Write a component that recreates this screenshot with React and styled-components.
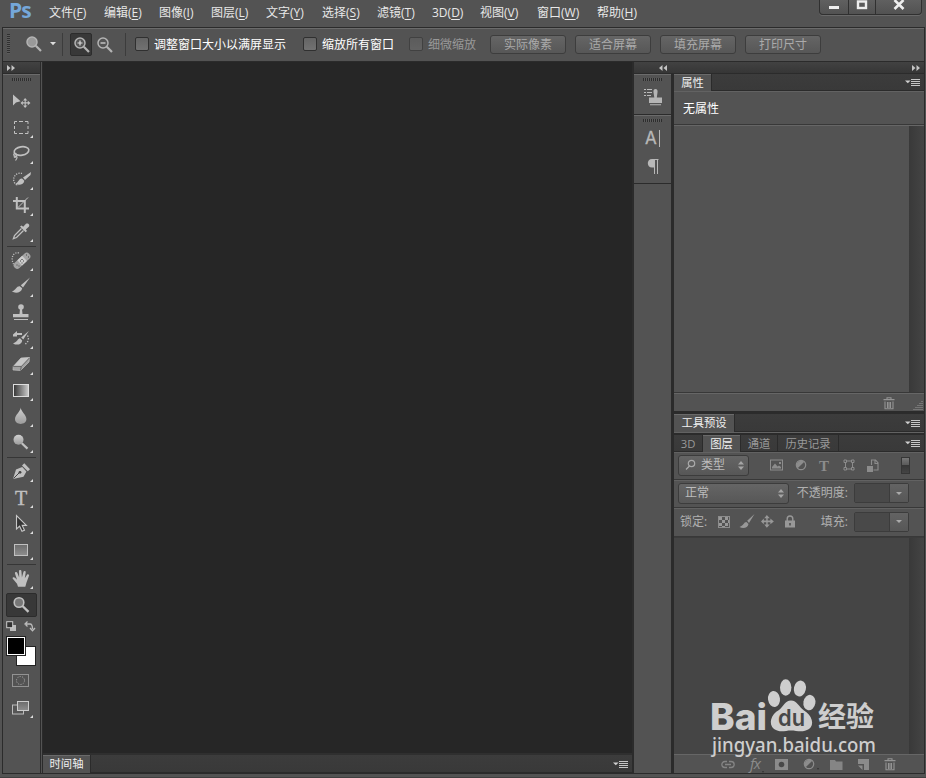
import styled, { createGlobalStyle, css } from 'styled-components';

const ICON = '#c0c0c0';
const DARK = '#2b2b2b';

const MENUS = [
  ['文件', 'F', 55],
  ['编辑', 'E', 55],
  ['图像', 'I', 52],
  ['图层', 'L', 55],
  ['文字', 'Y', 56],
  ['选择', 'S', 55],
  ['滤镜', 'T', 55],
  ['3D', 'D', 48],
  ['视图', 'V', 57],
  ['窗口', 'W', 60],
  ['帮助', 'H', 50],
];

function Icon({ w = 22, h = 22, children }) {
  return (
    <Svg width={w} height={h} viewBox={`0 0 ${w} ${h}`} fill="none">
      {children}
    </Svg>
  );
}

const BRUSH = 'M20 1.5 L10.8 9.2 L13 11.4 Z M9.8 10.2 C6.5 9.8 6.2 13.8 1.8 15.6 C6 18 11.5 16.5 12.2 12.2 Z';
const CROSS = 'M5 0 L7.5 2.8 H5.7 V4.8 H8 V3 L11 5.5 L8 8 V6.2 H5.7 V8.2 H7.5 L5 11 L2.8 8.2 H4.5 V6.2 H2.4 V8 L0 5.5 L2.4 3 V4.8 H4.5 V2.8 H2.8 Z';

const TOOLS = [
  [
    {
      id: 'move',
      plain: true,
      icon: (
        <>
          <path d="M3 3.5 V14.5 L6 11.5 L10.6 10.2 Z" fill={ICON} />
          <path d={CROSS} fill={ICON} transform="translate(10.6 7) scale(.9)" />
        </>
      ),
    },
    { id: 'marquee', icon: <path d="M4.5 7 V4.5 H7 M9 4.5 H13 M15 4.5 H18 V7 M18 9 V12 M18 14 V16.5 H15 M13 16.5 H9 M7 16.5 H4.5 V14 M4.5 12 V9" stroke={ICON} /> },
    {
      id: 'lasso',
      icon: (
        <>
          <ellipse cx="11.5" cy="8" rx="7.4" ry="4.2" stroke={ICON} strokeWidth="1.6" transform="rotate(-10 11.5 8)" />
          <path d="M6.5 10.5 C3 9.5 3 13 5.5 13.3 C8 13.5 7 15.5 5.5 17.5 M4 13.4 C4.5 15.5 6 14 6.8 11.5" stroke={ICON} strokeWidth="1.2" />
        </>
      ),
    },
    {
      id: 'quick',
      icon: (
        <>
          <path d="M12 4.5 A6 6 0 1 0 8 16.5" stroke={ICON} strokeWidth="1.3" strokeDasharray="1.2 1.2" />
          <path d="M21 3 L13 8.6 L15 11 L20.5 6 Z M12 9.5 C8.7 9.4 9 13 5.5 14.8 C9 16.8 14 15.5 14.3 11.8 Z" fill={ICON} />
        </>
      ),
    },
    {
      id: 'crop',
      icon: (
        <>
          <path d="M6.8 2 V13.5 H19 M3 6 H14.8 V18" stroke={ICON} strokeWidth="2" />
          <path d="M8 12.5 L18 2.5" stroke={ICON} />
        </>
      ),
    },
    {
      id: 'dropper',
      icon: (
        <>
          <path d="M11.5 7.5 L4.5 14.5 L3.4 17.6 L6.5 16.5 L13.5 9.5" stroke={ICON} strokeWidth="1.3" />
          <path d="M10 5.5 L11.5 4.5 L13.2 5.8 L16 2.8 C18 1.5 20.3 3.8 18.8 5.8 L15.8 8.4 L17 10 L15.6 11.3 Z" fill={ICON} />
        </>
      ),
    },
  ],
  [
    {
      id: 'heal',
      icon: (
        <>
          <path d="M9 3 C4 1.5 0 7 3.5 14" stroke={ICON} strokeWidth="1.3" strokeDasharray="1.2 1.3" />
          <rect x="1.8" y="7.2" width="20" height="7" rx="3.2" fill="#a4a4a4" transform="rotate(-43 12 10.5)" />
          <rect x="8.7" y="7.2" width="6.6" height="7" fill="#cdcdcd" transform="rotate(-43 12 10.5)" />
          <path d="M12 9 v1 M10 11 h1 M13 11 h1 M11.5 13 h1 M6.5 15 h1 M8.5 16 h1 M16 5 h1 M18 7 h1" stroke="#444" strokeWidth="1.2" />
        </>
      ),
    },
    { id: 'brush', icon: <path d={BRUSH} fill={ICON} /> },
    {
      id: 'stamp',
      icon: (
        <>
          <circle cx="11" cy="5" r="2.8" fill={ICON} />
          <path d="M10 7 H12 L12.5 12 H18.5 V15.2 H3 V12 H9.5 Z M4 17 H18 V18 H4 Z" fill={ICON} />
        </>
      ),
    },
    {
      id: 'history',
      icon: (
        <>
          <path d="M18.8 3 L11.2 9.4 L13.3 11.4 Z M10 10.2 C7.6 10.4 7.5 14 3 15.4 C7 17.8 12 16.4 12.2 12.4 Z" fill={ICON} />
          <path d="M3 6.5 L7 3 V5 H12 V7 H7 V8.5 H3 Z" fill={ICON} />
          <path d="M17.5 7.5 C19.5 11 18 15 14 16.7" stroke={ICON} strokeWidth="1.4" strokeDasharray="1.3 1.5" />
        </>
      ),
    },
    {
      id: 'eraser',
      icon: (
        <>
          <path d="M11 4 L19.5 3.5 L19 8 L10.5 16.5 L3 16 L3.2 12.6 Z" fill="#a0a0a0" stroke={ICON} strokeWidth=".7" />
          <path d="M11 4 L19.5 3.5 L11.5 12.2 L3.2 12.6 Z" fill="#c8c8c8" />
          <path d="M3.2 12.4 H11.4 L19.4 4 M11.3 12.4 L10.5 16.5" stroke="#555" strokeWidth=".8" />
        </>
      ),
    },
    { id: 'gradient', icon: <rect x="3.5" y="4.5" width="15" height="12" fill="url(#ramp)" stroke="#ddd" /> },
    { id: 'blur', icon: <path d="M10.7 1.6 C10.7 5.5 5 9 5 13 C5 19.5 16.4 19.5 16.4 13 C16.4 9 10.8 5.5 10.7 1.6 Z" fill="url(#metal)" /> },
    {
      id: 'dodge',
      icon: (
        <>
          <circle cx="8.5" cy="7.8" r="5" fill="url(#metal)" />
          <path d="M11.8 11.2 L17.5 16.6" stroke={ICON} strokeWidth="2.2" />
        </>
      ),
    },
  ],
  [
    {
      id: 'pen',
      icon: (
        <>
          <path d="M3 18 L6 8.5 L12.2 6 L16.4 10.4 L13.5 15.8 Z M12 4.5 L14.3 2.2 L20 8.2 L17.8 10.2 Z" fill={ICON} />
          <path d="M3.5 17.5 L9 12" stroke="#444" />
          <circle cx="10" cy="11.3" r="1.4" fill="#444" />
        </>
      ),
    },
    { id: 'type', icon: <text x="11" y="17.5" fontSize="20" textAnchor="middle" fontFamily="Liberation Serif, serif" stroke={ICON} strokeWidth=".4" fill={ICON}>T</text> },
    { id: 'path', icon: <path d="M6.5 2.5 V16 L9.6 13.2 L12 18.3 L14.5 17.2 L12.2 12.4 H16.4 Z" fill="#353535" stroke="#c8c8c8" strokeWidth="1.1" /> },
    { id: 'shape', icon: <rect x="4.5" y="5.5" width="13" height="11" fill="url(#grey)" stroke={ICON} /> },
  ],
  [
    { id: 'hand', icon: <path d="M8 18.8 L7 15.8 L2.6 10.6 C2.4 9.2 4 8.8 5 9.8 L7 11.8 L4.9 5.2 C4.9 3.8 6.9 3.6 7.4 5 L9.2 9.6 L9 3 C9.1 1.8 11.3 1.8 11.4 3 L11.9 9.5 L13.5 3.8 C14 2.6 15.9 3 15.7 4.4 L14.8 10.3 L17.2 6.5 C18.2 5.6 19.5 6.6 19 7.8 L16.5 14.6 L15.3 18.8 Z" fill={ICON} /> },
    {
      id: 'zoom',
      plain: true,
      active: true,
      icon: (
        <>
          <circle cx="9" cy="8.5" r="4.8" fill="#777" stroke={ICON} strokeWidth="1.6" />
          <path d="M12.5 12 L18.5 17.8" stroke={ICON} strokeWidth="2.4" />
        </>
      ),
    },
  ],
];

function Defs() {
  return (
    <DefsSvg width="0" height="0">
      <linearGradient id="ramp">
        <stop offset="0" stopColor="#333" />
        <stop offset="1" stopColor="#ccc" />
      </linearGradient>
      <linearGradient id="metal" x2="0" y2="1">
        <stop offset="0" stopColor="#d0d0d0" />
        <stop offset="1" stopColor="#9c9c9c" />
      </linearGradient>
      <linearGradient id="grey" x2="0" y2="1">
        <stop offset="0" stopColor="#6c6c6c" />
        <stop offset="1" stopColor="#8e8e8e" />
      </linearGradient>
    </DefsSvg>
  );
}

function Magnifier({ sign }) {
  return (
    <Icon w={18} h={18}>
      <circle cx="7" cy="7" r="5" fill={sign ? '#555' : '#999'} stroke="#b4b4b4" strokeWidth="1.5" />
      <path d="M10.8 10.8 L16 16" stroke="#b4b4b4" strokeWidth="2.2" />
      {sign && <path d={sign === '+' ? 'M4.5 7 H9.5 M7 4.5 V9.5' : 'M4.5 7 H9.5'} stroke="#ddd" strokeWidth="1.2" />}
    </Icon>
  );
}

function PanelMenu() {
  return (
    <Icon w={15} h={9}>
      <path d="M0 2.5 H5.6 L2.8 5.3 Z" fill="#d0d0d0" />
      <path d="M6 1.5 H15 M6 3.5 H15 M6 5.5 H15 M6 7.5 H15" stroke="#c6c6c6" />
    </Icon>
  );
}

function Chevrons({ left }) {
  return (
    <Icon w={8} h={6}>
      <path d={left ? 'M3.5 0 V6 L0 3 Z M8 0 V6 L4.5 3 Z' : 'M0 0 V6 L3.5 3 Z M4.5 0 V6 L8 3 Z'} fill="#c4c4c4" />
    </Icon>
  );
}

function Trash() {
  return (
    <Icon w={12} h={13}>
      <path d="M4 2 V.7 H8 V2 M.5 2.6 H11.5 M2 4.5 V11.8 H10 V4.5 M4.5 5 V11 M6 5 V11 M7.5 5 V11" stroke="#949494" strokeWidth="1.1" />
    </Icon>
  );
}

function UpDown() {
  return (
    <Icon w={6} h={9}>
      <path d="M0 3.5 L3 0 L6 3.5 Z M0 5.5 L3 9 L6 5.5 Z" fill="#a5a5a5" />
    </Icon>
  );
}

function Adjust() {
  return (
    <Icon w={12} h={12}>
      <circle cx="6" cy="6" r="4.7" stroke="#8c8c8c" strokeWidth="1.2" />
      <path d="M9.3 2.7 A4.7 4.7 0 0 0 2.7 9.3 Z" fill="#8c8c8c" />
    </Icon>
  );
}

function NumberField() {
  return (
    <Field>
      <FieldValue />
      <FieldButton>
        <Icon w={6} h={3}>
          <path d="M0 0 H6 L3 3 Z" fill="#aaa" />
        </Icon>
      </FieldButton>
    </Field>
  );
}

function Toolbox() {
  return (
    <ToolColumn>
      <ColumnHead $pad="4px">
        <Chevrons />
      </ColumnHead>
      <GripRow>
        <Grip />
      </GripRow>
      {TOOLS.map((group) => (
        <ToolGroup key={group[0].id}>
          {group.map((tool) => (
            <Tool key={tool.id} $active={tool.active} $corner={!tool.plain}>
              <Icon>{tool.icon}</Icon>
            </Tool>
          ))}
        </ToolGroup>
      ))}
      <MiniRow>
        <Icon w={11} h={11}>
          <rect x="4" y="4" width="6" height="6" fill="#bbb" />
          <rect x=".7" y=".7" width="6" height="6" fill="#333" stroke="#ccc" />
        </Icon>
        <Icon w={11} h={11}>
          <path d="M2 3 H6 Q8.5 3 8.5 8 M3.5 .5 L1 3 L3.5 5.5 M6 7 L8.5 9.8 L11 7" stroke="#bbb" strokeWidth="1.3" />
        </Icon>
      </MiniRow>
      <Swatches>
        <Swatch $color="#fff" $back />
        <Swatch $color="#000" />
      </Swatches>
      <ModeIcon $h={29}>
        <Icon w={17} h={13}>
          <rect x=".5" y=".5" width="16" height="12" stroke="#929292" />
          <circle cx="8.5" cy="6.5" r="4" stroke="#aaa" strokeDasharray="1.1 1.4" />
        </Icon>
      </ModeIcon>
      <ModeIcon $h={26} $corner>
        <Icon w={17} h={14}>
          <rect x=".5" y="4" width="11" height="9" fill="#555" stroke="#bbb" />
          <rect x="5.5" y=".5" width="11" height="9" fill="url(#grey)" stroke="#ccc" />
        </Icon>
      </ModeIcon>
    </ToolColumn>
  );
}

function Dock() {
  return (
    <DockColumn>
      <DockGroup $h={40}>
        <Grip />
        <DockIcon $top={7}>
          <Icon w={20} h={18}>
            <path d="M1 1.5 H3 M1 4.5 H3 M1 7.5 H3 M4 1.5 H9 M4 4.5 H9 M4 7.5 H8" stroke="#bbb" />
            <path d="M10.5 4.5 Q10 1 12.5 1 Q15 1 14.5 4.5 L13.8 9.5 H19 V15 H6 V9.5 H11.3 Z M7 16.2 H18 V17.2 H7 Z" fill="#b5b5b5" />
          </Icon>
        </DockIcon>
      </DockGroup>
      <DockGroup $h={68}>
        <Grip />
        <DockIcon $top={7}>
          <Icon w={16} h={18}>
            <text x="0" y="15" fontSize="17" fontFamily="Inter, sans-serif" stroke="#b8b8b8" strokeWidth=".3" fill="#b8b8b8">A</text>
            <path d="M14.5 1 V18" stroke="#b8b8b8" />
          </Icon>
        </DockIcon>
        <DockIcon $top={12}>
          <Icon w={14} h={16}>
            <path d="M12.5 .5 H6 M8.5 1 V15 M11.5 1 V15" stroke="#b8b8b8" />
            <path d="M9 0 H6 C.4 0 .4 8.5 6 8.5 H9 Z" fill="#b8b8b8" />
          </Icon>
        </DockIcon>
      </DockGroup>
    </DockColumn>
  );
}

function Panels() {
  return (
    <PanelStack>
      <TabBar $h={17}>
        <Tab $w={38} $active>属性</Tab>
        <PanelMenu />
      </TabBar>
      <PropertyTitle>无属性</PropertyTitle>
      <ScrollArea $h={267} />
      <PropertyFooter>
        <Trash />
        <Icon w={10} h={10}>
          <path d="M9 1 v1 M7 3 v1 M9 3 v1 M5 5 v1 M7 5 v1 M9 5 v1 M3 7 v1 M5 7 v1 M7 7 v1 M9 7 v1 M1 9 v1 M3 9 v1 M5 9 v1 M7 9 v1 M9 9 v1" stroke="#999" />
        </Icon>
      </PropertyFooter>
      <TabBar $h={18}>
        <Tab $w={61} $active>工具预设</Tab>
        <PanelMenu />
      </TabBar>
      <Gap />
      <TabBar $h={17}>
        <Tab $w={29}>3D</Tab>
        <Tab $w={38} $active>图层</Tab>
        <Tab $w={37}>通道</Tab>
        <Tab $w={61}>历史记录</Tab>
        <PanelMenu />
      </TabBar>
      <LayerRow $h={28}>
        <Select $w={71}>
          <Icon w={11} h={12}>
            <circle cx="6.5" cy="4.5" r="3.2" stroke="#aaa" strokeWidth="1.2" />
            <path d="M4.5 7 L1 10.5" stroke="#aaa" strokeWidth="1.3" />
          </Icon>
          <span>类型</span>
          <UpDown />
        </Select>
        <FilterIcons>
          <Icon w={13} h={12}>
            <rect x=".5" y="1" width="12" height="10" stroke="#8c8c8c" />
            <path d="M2 9.5 V8 L5 4.5 L7.5 7.5 L9 6.5 L11 8 V9.5 Z M9 3 h2 v2 h-2 Z" fill="#8c8c8c" />
          </Icon>
          <Adjust />
          <Icon w={12} h={13}>
            <text x="5" y="11.5" fontSize="15" fontWeight="bold" textAnchor="middle" fontFamily="Liberation Serif, serif" fill="#8c8c8c">T</text>
          </Icon>
          <Icon w={12} h={12}>
            <path d="M2.5 3 V9 M9.5 3 V9 M3 2 H9 M3 10 H9" stroke="#8c8c8c" />
            <path d="M1 1 h2.5 v2.5 h-2.5 Z M8.5 1 h2.5 v2.5 h-2.5 Z M1 8.5 h2.5 v2.5 h-2.5 Z M8.5 8.5 h2.5 v2.5 h-2.5 Z" fill="#535353" stroke="#8c8c8c" />
          </Icon>
          <Icon w={12} h={13}>
            <path d="M4.5 6 V1 H8.5 L11 3.8 V11 H6.5 M8 1 V4.5 H11" stroke="#8c8c8c" strokeWidth="1.1" />
            <path d="M0 7 H6 V13 H0 Z" fill="#8c8c8c" />
          </Icon>
        </FilterIcons>
        <Switch />
      </LayerRow>
      <LayerRow $h={28}>
        <Select $w={111}>
          <span>正常</span>
          <UpDown />
        </Select>
        <FieldLabel>不透明度:</FieldLabel>
        <NumberField />
      </LayerRow>
      <LayerRow $h={29}>
        <LockLabel>锁定:</LockLabel>
        <LockIcons>
          <Icon w={12} h={12}>
            <rect x=".5" y=".5" width="11" height="11" stroke="#8c8c8c" />
            <path d="M1 1h3v3H1Z M7 1h3v3H7Z M4 4h3v3H4Z M1 7h3v3H1Z M7 7h3v3H7Z M10 4h1v3h-1Z M4 10h3v1H4Z" fill="#989898" />
          </Icon>
          <Icon w={13} h={15}>
            <path d="M15.5 0 L8.2 6.8 L10 9 Z M7.5 8 C4.5 8 5 11.5 .5 13 C4 15.2 9 14 9.5 10 Z" fill="#989898" />
          </Icon>
          <Icon w={15} h={13}>
            <path d={CROSS} fill="#989898" transform="scale(1.17)" />
          </Icon>
          <Icon w={10} h={13}>
            <path d="M2.2 6 V4 Q2.2 1 5 1 Q7.8 1 7.8 4 V6" stroke="#989898" strokeWidth="1.4" />
            <path d="M0 5.5 H10 V12.5 H0 Z" fill="#989898" />
            <path d="M5 8 V10.5" stroke="#444" strokeWidth="1.4" />
          </Icon>
        </LockIcons>
        <FieldLabel>填充:</FieldLabel>
        <NumberField />
      </LayerRow>
      <ScrollArea $dim />
      <LayerFooter>
        <Icon w={14} h={9}>
          <path d="M6 1.5 H4 C-.2 1.5 -.2 7.5 4 7.5 H6 M8 1.5 H10 C14.2 1.5 14.2 7.5 10 7.5 H8 M4 4.5 H10" stroke="#858585" strokeWidth="1.3" />
        </Icon>
        <MenuIcon><Fx>fx</Fx></MenuIcon>
        <Icon w={13} h={11}>
          <rect width="13" height="11" fill="#8b8b8b" />
          <circle cx="6.5" cy="5.5" r="2.8" fill="#484848" />
        </Icon>
        <MenuIcon><Adjust /></MenuIcon>
        <Icon w={13} h={11}>
          <path d="M0 1 H5 L6 2.5 H12.5 V11 H0 Z" fill="#858585" />
        </Icon>
        <Icon w={11} h={11}>
          <path d="M0 0 H11 V11 H6 V5 H0 Z M0 6.5 H4.5 V11 Z" fill="#8b8b8b" />
        </Icon>
        <Trash />
      </LayerFooter>
    </PanelStack>
  );
}

function Watermark() {
  return (
    <Mark width="170" height="92" viewBox="708 677 170 92" fill="#cecece">
      <text x="710" y="730" fontFamily="Inter, sans-serif" fontWeight="800" fontSize="37" textLength="57" lengthAdjust="spacingAndGlyphs">Bai</text>
      <ellipse cx="774" cy="699" rx="6" ry="8" transform="rotate(-8 774 699)" />
      <ellipse cx="785.7" cy="687.5" rx="5.7" ry="8.3" />
      <ellipse cx="800" cy="688.5" rx="6" ry="8" transform="rotate(12 800 688)" />
      <ellipse cx="809.5" cy="702.5" rx="6" ry="7.8" transform="rotate(10 809 702)" />
      <path d="M791 700.5 C797 700.5 799 707 804 710.5 C812 715 815 725 809 729 C803 733 797 730.5 791 730.5 C785 730.5 780 733 774 729 C768 724 771 714 779 710 C784 706 785 700.5 791 700.5 Z" />
      <text x="778" y="726" fontFamily="Inter, sans-serif" fontWeight="600" fontSize="23" textLength="27" lengthAdjust="spacingAndGlyphs" fill="#484848">du</text>
      <text x="818" y="727" fontFamily="'Noto Sans CJK SC', sans-serif" fontWeight="700" fontSize="28" textLength="56" lengthAdjust="spacingAndGlyphs">经验</text>
      <text x="712" y="752" fontFamily="'Noto Sans', sans-serif" fontWeight="500" fontSize="19" textLength="164" lengthAdjust="spacingAndGlyphs">jingyan.baidu.com</text>
    </Mark>
  );
}

export default function App() {
  return (
    <Window>
      <GlobalStyle />
      <Defs />
      <MenuBar>
        <Logo>Ps</Logo>
        {MENUS.map(([label, key, width]) => (
          <MenuItem key={key} $w={width}>
            {label}(<u>{key}</u>)
          </MenuItem>
        ))}
        <WindowButtons>
          <WindowButton $w={28}>
            <Icon w={12} h={12}>
              <rect x="1" y="6" width="10" height="3" fill="#eee" />
            </Icon>
          </WindowButton>
          <WindowButton $w={27}>
            <Icon w={12} h={12}>
              <rect x="2" y="1.5" width="8" height="6.5" stroke="#eee" strokeWidth="2.4" />
            </Icon>
          </WindowButton>
          <WindowButton $w={46}>
            <Icon w={12} h={12}>
              <path d="M1.5 0 L10.5 9 M10.5 0 L1.5 9" stroke="#eee" strokeWidth="2.6" />
            </Icon>
          </WindowButton>
        </WindowButtons>
      </MenuBar>
      <Frame>
        <OptionsBar>
          <SideGrip />
          <CurrentTool>
            <Magnifier />
            <Icon w={6} h={4}>
              <path d="M0 0 H6 L3 3.3 Z" fill="#ddd" />
            </Icon>
          </CurrentTool>
          <ZoomModes>
            <ZoomMode $active><Magnifier sign="+" /></ZoomMode>
            <ZoomMode><Magnifier sign="-" /></ZoomMode>
          </ZoomModes>
          <Option $gap={17}><CheckBox />调整窗口大小以满屏显示</Option>
          <Option $gap={15}><CheckBox />缩放所有窗口</Option>
          <Option $gap={14} $disabled><CheckBox />细微缩放</Option>
          <OptionButton>实际像素</OptionButton>
          <OptionButton>适合屏幕</OptionButton>
          <OptionButton>填充屏幕</OptionButton>
          <OptionButton>打印尺寸</OptionButton>
        </OptionsBar>
        <Workspace>
          <Toolbox />
          <Center>
            <Canvas />
            <TabBar $h={18}>
              <Tab $w={48} $active>时间轴</Tab>
              <PanelMenu />
            </TabBar>
          </Center>
          <RightSide>
            <RightHead>
              <Chevrons left />
              <Chevrons />
            </RightHead>
            <RightBody>
              <Dock />
              <Panels />
            </RightBody>
          </RightSide>
        </Workspace>
      </Frame>
      <Watermark />
    </Window>
  );
}

const GlobalStyle = createGlobalStyle`
  * {
    box-sizing: border-box;
  }
  body {
    margin: 0;
    overflow: hidden;
    background: #535353;
  }
`;

const Svg = styled.svg`
  display: block;
  flex: none;
  overflow: visible;
`;

const DefsSvg = styled.svg`
  position: absolute;
`;

const Window = styled.div`
  position: relative;
  width: 926px;
  height: 778px;
  display: flex;
  flex-direction: column;
  background: #535353;
  border-bottom: 1px solid #404040;
  color: #e8e8e8;
  font: 12px/16px 'Open Sans', 'Noto Sans CJK SC', sans-serif;
  white-space: nowrap;
  overflow: hidden;
`;

const MenuBar = styled.div`
  height: 27px;
  flex: none;
  display: flex;
  padding-left: 9px;
`;

const Logo = styled.div`
  width: 40px;
  color: #75a7da;
  font: 700 21px/20px 'Open Sans', sans-serif;
  letter-spacing: -1px;
`;

const MenuItem = styled.div`
  width: ${({ $w }) => $w}px;
  flex: none;
  padding-top: 5px;
  font-size: 12px;

  u {
    text-underline-offset: 2px;
  }
`;

const WindowButtons = styled.div`
  display: flex;
  height: 15px;
  margin-left: auto;
  margin-right: 4px;
  border: 1px solid #303030;
  border-top: 0;
  border-radius: 0 0 4px 4px;
  background: linear-gradient(#606060, #525252);
  box-shadow: 0 1px 0 #696969;
`;

const WindowButton = styled.div`
  width: ${({ $w }) => $w}px;
  display: flex;
  justify-content: center;

  & + & {
    border-left: 1px solid #303030;
  }
`;

const Frame = styled.div`
  height: 747px;
  flex: none;
  margin: 0 1px 0 2px;
  display: flex;
  flex-direction: column;
  border: 1px solid ${DARK};
`;

const OptionsBar = styled.div`
  height: 34px;
  flex: none;
  display: flex;
  align-items: center;
  padding: 0 0 2px 4px;
  border-top: 1px solid #6b6b6b;
  border-bottom: 1px solid ${DARK};
`;

const SideGrip = styled.div`
  width: 3px;
  height: 20px;
  background: repeating-linear-gradient(#303030 0 1px, #5c5c5c 1px 2px);
`;

const CurrentTool = styled.div`
  display: flex;
  align-items: center;
  gap: 7px;
  height: 23px;
  width: 53px;
  padding-left: 15px;
  border-right: 1px solid #3c3c3c;
`;

const ZoomModes = styled.div`
  display: flex;
  gap: 2px;
  height: 23px;
  width: 63px;
  padding-left: 7px;
  border-right: 1px solid #3c3c3c;
`;

const ZoomMode = styled.div`
  width: 22px;
  height: 23px;
  padding: 3px 0 0 2px;
  border-radius: 2px;
  ${({ $active }) => $active && css`
    background: #383838;
    border: 1px solid #2c2c2c;
    padding: 2px;
  `}
`;

const CheckBox = styled.span`
  width: 14px;
  height: 14px;
  margin-right: 5px;
  margin-top: -1px;
  border: 1px solid #303030;
  border-radius: 2px;
  background: linear-gradient(#646464, #727272);
`;

const Option = styled.label`
  display: flex;
  align-items: center;
  margin-right: ${({ $gap }) => $gap}px;
  padding-top: 1px;
  color: ${({ $disabled }) => ($disabled ? '#999' : '#fff')};

  &:first-of-type {
    margin-left: 9px;
  }
  ${CheckBox} {
    opacity: ${({ $disabled }) => ($disabled ? 0.5 : 1)};
  }
`;

const OptionButton = styled.button`
  width: 76px;
  height: 19px;
  margin: 0 9px 0 0;
  padding: 1px 0 0;
  border: 1px solid #3d3d3d;
  border-radius: 3px;
  background: linear-gradient(#656565, #575757);
  color: #aaa;
  font: inherit;
  line-height: 16px;
`;

const Workspace = styled.div`
  flex: 1;
  min-height: 0;
  display: flex;
`;

const ToolColumn = styled.div`
  width: 38px;
  flex: none;
  display: flex;
  flex-direction: column;
  border-right: 1px solid ${DARK};
`;

const ColumnHead = styled.div`
  height: 12px;
  flex: none;
  display: flex;
  align-items: center;
  padding-left: ${({ $pad }) => $pad};
  background: linear-gradient(#424242, #363636);
  border-bottom: 1px solid ${DARK};
`;

const Grip = styled.div`
  width: 19px;
  height: 3px;
  flex: none;
  background: repeating-linear-gradient(90deg, #2d2d2d 0 1px, #5c5c5c 1px 2px);
`;

const GripRow = styled.div`
  height: 15px;
  flex: none;
  padding: 3px 0 0 9px;
  border-top: 1px solid #6b6b6b;
`;

const ToolGroup = styled.div`
  & + & {
    padding-top: 3px;
    background: linear-gradient(#363636, #363636) 4px 1px / 29px 1px no-repeat;
  }
`;

const cornerMark = css`
  &::after {
    content: '';
    position: absolute;
    left: 27px;
    bottom: 3px;
    border-left: 3px solid transparent;
    border-bottom: 3px solid #ddd;
  }
`;

const Tool = styled.div`
  position: relative;
  height: 26px;
  padding: 2px 0 0 7px;
  ${({ $corner }) => $corner && cornerMark}
  ${({ $active }) => $active && css`
    height: 24px;
    width: 31px;
    margin: 1px 0 1px 3px;
    padding: 0 0 0 3px;
    border: 1px solid #2c2c2c;
    border-radius: 2px;
    background: #383838;
  `}
`;

const MiniRow = styled.div`
  height: 18px;
  flex: none;
  display: flex;
  gap: 7px;
  padding: 3px 0 0 3px;
`;

const Swatches = styled.div`
  position: relative;
  height: 30px;
  width: 30px;
  margin-left: 3px;
  flex: none;
`;

const Swatch = styled.div`
  position: absolute;
  width: 20px;
  height: 20px;
  top: ${({ $back }) => ($back ? 10 : 0)}px;
  left: ${({ $back }) => ($back ? 10 : 0)}px;
  background: ${({ $color }) => $color};
  border: 1px solid #222;
  box-shadow: inset 0 0 0 1px #fff;
`;

const ModeIcon = styled.div`
  position: relative;
  height: ${({ $h }) => $h}px;
  flex: none;
  display: flex;
  align-items: center;
  padding-left: 9px;
  ${({ $corner }) => $corner && cornerMark}
`;

const Center = styled.div`
  width: 590px;
  flex: none;
  margin-left: 1px;
  display: flex;
  flex-direction: column;
  border-left: 1px solid ${DARK};
`;

const Canvas = styled.div`
  flex: 1;
  background: #262626;
  border-bottom: 2px solid #2f2f2f;
`;

const TabBar = styled.div`
  height: ${({ $h }) => $h}px;
  flex: none;
  display: flex;
  align-items: center;
  background: linear-gradient(#3c3c3c, #393939);
  box-shadow: inset 0 -1px #2b2b2b;

  > svg {
    margin: 0 4px 0 auto;
  }
`;

const Tab = styled.div`
  width: ${({ $w }) => $w}px;
  height: 100%;
  padding-top: 1px;
  text-align: center;
  color: #999;
  font-size: 11.3px;
  border-right: 1px solid ${DARK};
  box-shadow: inset 0 -1px #2b2b2b;
  ${({ $active }) => $active && css`
    color: #f0f0f0;
    background: #535353;
    box-shadow: inset 0 1px #6a6a6a;
  `}
`;

const RightSide = styled.div`
  flex: 1;
  display: flex;
  flex-direction: column;
  border-left: 2px solid ${DARK};
`;

const RightHead = styled.div`
  height: 12px;
  flex: none;
  display: flex;
  align-items: center;
  justify-content: space-between;
  padding: 0 4px 0 25px;
  background: linear-gradient(#424242, #363636);
  border-bottom: 1px solid ${DARK};
`;

const RightBody = styled.div`
  flex: 1;
  min-height: 0;
  display: flex;
`;

const DockColumn = styled.div`
  width: 40px;
  flex: none;
  border-right: 3px solid ${DARK};
`;

const DockGroup = styled.div`
  height: ${({ $h }) => $h + 1}px;
  display: flex;
  flex-direction: column;
  align-items: center;
  padding-top: 3px;
  border-top: 1px solid #6b6b6b;
  border-bottom: 1px solid ${DARK};
`;

const DockIcon = styled.div`
  margin-top: ${({ $top }) => $top}px;
`;

const PanelStack = styled.div`
  flex: 1;
  display: flex;
  flex-direction: column;
`;

const PropertyTitle = styled.div`
  height: 34px;
  flex: none;
  padding: 9px 0 0 9px;
  color: #fff;
  border-top: 1px solid #626262;
  border-bottom: 1px solid #383838;
`;

const ScrollArea = styled.div`
  ${({ $h }) => ($h ? `height: ${$h}px; flex: none;` : 'flex: 1;')}
  background: ${({ $dim }) => ($dim ? '#454545' : '#535353')};
  border-top: 1px solid ${({ $dim }) => ($dim ? '#3b3b3b' : '#666')};
  position: relative;

  &::after {
    content: '';
    position: absolute;
    inset: 0 0 0 auto;
    width: 15px;
    background: linear-gradient(90deg, #393939, #444);
  }
`;

const PropertyFooter = styled.div`
  height: 22px;
  flex: none;
  display: flex;
  justify-content: flex-end;
  gap: 18px;
  padding: 4px 1px 0 0;
  border-top: 1px solid #383838;
  border-bottom: 3px solid ${DARK};
  box-shadow: inset 0 1px #666;

  svg + svg {
    margin-top: 3px;
  }
`;

const Gap = styled.div`
  height: 3px;
  flex: none;
  border-top: 1px solid #626262;
  background: ${DARK};
`;

const LayerRow = styled.div`
  height: ${({ $h }) => $h}px;
  flex: none;
  display: flex;
  align-items: center;
  padding: 0 15px 2px 4px;
  color: #b0b0b0;
  border-top: 1px solid #626262;
  border-bottom: 1px solid #383838;
`;

const Select = styled.div`
  width: ${({ $w }) => $w}px;
  height: 21px;
  display: flex;
  align-items: center;
  gap: 5px;
  padding: 0 4px 0 6px;
  border: 1px solid #3c3c3c;
  border-radius: 3px;
  background: linear-gradient(#656565, #575757);
  color: #bcbcbc;

  svg:last-child {
    margin-left: auto;
  }
`;

const FilterIcons = styled.div`
  display: flex;
  align-items: center;
  gap: 12px;
  margin-left: 21px;
`;

const Switch = styled.div`
  width: 9px;
  height: 17px;
  margin-left: auto;
  margin-right: -1px;
  border: 1px solid #363636;
  background: linear-gradient(#777, #5b5b5b 45%, #363636 45%, #444);
`;

const FieldLabel = styled.div`
  margin-left: auto;
  margin-right: 6px;
`;

const LockLabel = styled.div`
  width: 38px;
  padding-left: 2px;
`;

const LockIcons = styled.div`
  display: flex;
  align-items: center;
  gap: 9px;
  padding-left: 2px;
`;

const Field = styled.div`
  display: flex;
  width: 55px;
  height: 20px;
  border: 1px solid #3c3c3c;
  border-radius: 2px;
`;

const FieldValue = styled.div`
  flex: 1;
  background: #494949;
`;

const FieldButton = styled.div`
  width: 19px;
  display: flex;
  align-items: center;
  justify-content: center;
  border-left: 1px solid #3c3c3c;
  background: linear-gradient(#636363, #575757);
`;

const LayerFooter = styled.div`
  height: 19px;
  flex: none;
  display: flex;
  align-items: center;
  justify-content: space-between;
  padding: 0 28px 0 47px;
  border-top: 1px solid #666;
  box-shadow: 0 -1px #363636;
`;

const MenuIcon = styled.div`
  position: relative;

  &::after {
    content: '';
    position: absolute;
    right: -4px;
    bottom: 0;
    border: 1.5px solid transparent;
    border-top: 2px solid #333;
    border-bottom: 0;
  }
`;

const Fx = styled.span`
  color: #8b8b8b;
  font: italic 15px/14px 'Open Sans', sans-serif;
  letter-spacing: -1px;
`;

const Mark = styled.svg`
  position: absolute;
  left: 708px;
  top: 677px;
`;
